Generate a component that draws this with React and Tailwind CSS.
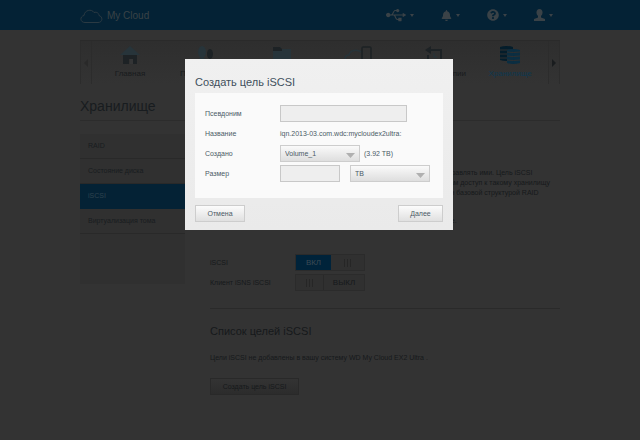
import { useState } from "react";
import { FaBell, FaQuestionCircle, FaUsb } from "react-icons/fa";

const sections = ["RAID", "Состояние диска", "iSCSI", "Виртуализация тома"];

function HomeIcon() {
  return (
    <svg width="20" height="18" viewBox="0 0 20 18">
      <path d="M3 9h14v9h-4v-5H9v5H3z" fill="#1d2225" />
      <path d="M10 0 20 9H0z" fill="#27343a" />
      <path d="M10 13h3v5h-3z" fill="#343536" />
    </svg>
  );
}

function UsersIcon() {
  return (
    <svg width="20" height="18" viewBox="0 0 20 18">
      <ellipse cx="6" cy="6" rx="4" ry="6" fill="#27343a" />
      <path d="M1 18c0-5 2-6 5-6s5 1 5 6z" fill="#27343a" />
      <ellipse cx="14" cy="8" rx="3" ry="5" fill="#1d2225" />
      <path d="M10 18c0-4 1-5 4-5s5 1 5 5z" fill="#1d2225" />
    </svg>
  );
}

function FolderIcon() {
  return (
    <svg width="18" height="18" viewBox="0 0 18 18">
      <path d="M0 1h8v2h10v14H0z" fill="#27343a" />
      <path d="M0 1h7l2 2v2H0z" fill="#1d2225" />
    </svg>
  );
}

function CloudAccessIcon() {
  return (
    <svg width="28" height="18" viewBox="0 0 28 18" fill="none">
      <path
        d="M17 16H5c-5 0-5-7 0-7 1-5 8-6 12-3"
        stroke="#27343a"
        strokeWidth="1.5"
      />
      <rect x="18" y="1" width="9" height="16" rx="1" stroke="#1d2225" strokeWidth="1.5" />
    </svg>
  );
}

function BackupIcon() {
  return (
    <svg width="18" height="18" viewBox="0 0 18 18" fill="none">
      <path d="M3 4h13v13H3V9" stroke="#1d2225" strokeWidth="2" />
      <path d="M6 0v8L0 4z" fill="#1d2225" />
      <path d="M9 7v4h3" stroke="#27343a" />
    </svg>
  );
}

function StorageIcon() {
  return (
    <svg width="20" height="18" viewBox="0 0 20 18">
      <path d="M0 1q6-2 13 0v13q-7 2-13 0z" fill="#041d2b" />
      <path d="M0 4h13M0 8h13M0 12h13" stroke="#303030" />
      <path d="M7 4q6-2 13 0v13q-7 2-13 0z" fill="#0b2e42" />
      <path d="M7 6q6 1 13 0M7 10q6 1 13 0M7 14q6 1 13 0" stroke="#303030" fill="none" />
    </svg>
  );
}

function UserIcon() {
  return (
    <svg width="11" height="12" viewBox="0 0 11 12" fill="currentColor">
      <ellipse cx="5.5" cy="3.5" rx="3" ry="3.5" />
      <path d="M4 6h3v2.5l4 1.5v2H0v-2l4-1.5z" />
    </svg>
  );
}

function Caret() {
  return (
    <svg width="4" height="3" viewBox="0 0 4 3" fill="currentColor">
      <path d="M0 0h4L2 3z" />
    </svg>
  );
}

const navItems = [
  { label: "Главная", icon: <HomeIcon /> },
  { label: "Пользователи", icon: <UsersIcon /> },
  { label: "Общие ресурсы", icon: <FolderIcon /> },
  { label: "Доступ к облаку", icon: <CloudAccessIcon /> },
  { label: "Резервные копии", icon: <BackupIcon /> },
  { label: "Хранилище", icon: <StorageIcon />, active: true },
];

function Header() {
  return (
    <header className="h-[30px] bg-[#042235]">
      <div className="mx-auto flex h-full max-w-[480px] items-center justify-between pr-[7px] text-[#3a4247]">
        <a href="#home" className="flex items-center gap-1 pt-0.5 text-[10px]">
          <svg width="23" height="15" viewBox="0 0 23 15" fill="none">
            <path
              d="M5 13.5C0 13.5-.5 7.500 4 6.500 4.500 1 11.500-.5 14 3.500c3-1 5 1 5 3 4 1 4 7-1 7z"
              stroke="#2b3a43"
            />
          </svg>
          My Cloud
        </a>
        <div className="flex gap-[27px]">
          <button aria-label="USB" className="flex items-center gap-1">
            <FaUsb size={20} />
            <Caret />
          </button>
          <button aria-label="Уведомления" className="flex items-center gap-1">
            <FaBell size={11} />
            <Caret />
          </button>
          <button aria-label="Справка" className="flex items-center gap-1">
            <FaQuestionCircle size={12} />
            <Caret />
          </button>
          <button aria-label="Пользователь" className="flex items-center gap-1">
            <UserIcon />
            <Caret />
          </button>
        </div>
      </div>
    </header>
  );
}

function Nav() {
  return (
    <nav className="mt-[10px] flex h-11 border-t border-[#2a2a2a] bg-linear-to-b from-[#2e2e2e] to-[#333333] text-[8px]">
      <button
        aria-label="Назад"
        className="flex w-3 items-center justify-center border-x border-[#2c2c2c] text-[#292929]"
      >
        <svg width="4" height="8" viewBox="0 0 4 8" fill="currentColor">
          <path d="M4 0v8L0 4z" />
        </svg>
      </button>
      <div className="grid flex-1 grid-cols-6">
        {navItems.map((item) => (
          <a
            key={item.label}
            href="#nav"
            className={`flex flex-col items-center gap-[5px] pt-[5px] whitespace-nowrap ${
              item.active ? "text-[#0d3850]" : "text-[#181b1d]"
            }`}
          >
            {item.icon}
            <span>{item.label}</span>
          </a>
        ))}
      </div>
      <button
        aria-label="Вперед"
        className="flex w-3 items-center justify-center border-x border-[#2c2c2c] text-[#191c1e]"
      >
        <svg width="4" height="8" viewBox="0 0 4 8" fill="currentColor">
          <path d="M0 0v8l4-4z" />
        </svg>
      </button>
    </nav>
  );
}

function Grip() {
  return (
    <span className="flex h-2 w-[7px] justify-between">
      <span className="w-px bg-[#262626]" />
      <span className="w-px bg-[#262626]" />
      <span className="w-px bg-[#262626]" />
    </span>
  );
}

function Toggle({ id, checked, onChange }) {
  return (
    <label
      htmlFor={id}
      className="flex h-[17px] w-[70px] border border-[#2b2b2b] bg-[#303030] text-[8px]"
    >
      <input
        id={id}
        type="checkbox"
        className="sr-only"
        checked={checked}
        onChange={(e) => onChange(e.target.checked)}
      />
      {checked ? (
        <>
          <span className="flex w-[35px] items-center justify-center bg-[#00233a] text-[#3b4a54]">ВКЛ</span>
          <span className="flex flex-1 items-center justify-center">
            <Grip />
          </span>
        </>
      ) : (
        <>
          <span className="flex w-7 items-center justify-center border-r border-[#292929]">
            <Grip />
          </span>
          <span className="flex flex-1 items-center justify-center text-[#16191b]">ВЫКЛ</span>
        </>
      )}
    </label>
  );
}

function Select({ id, label, options }) {
  return (
    <span className="relative w-[80px]">
      <select
        id={id}
        aria-label={label}
        className="block h-[17px] w-full appearance-none border border-[#cdcdcd] bg-linear-to-b from-[#fafafa] to-[#dedede] pl-1"
      >
        {options.map((o) => (
          <option key={o}>{o}</option>
        ))}
      </select>
      <svg
        className="pointer-events-none absolute top-[8px] right-[5px]"
        width="9"
        height="5"
        viewBox="0 0 9 5"
        fill="#b0b0b0"
      >
        <path d="M0 0h9L4.500 5z" />
      </svg>
    </span>
  );
}

const buttonClass =
  "h-[17px] border border-[#cdcdcd] bg-linear-to-b from-[#fcfcfc] to-[#e0e0e0]";
const inputClass = "h-[17px] border border-[#c8c8c8] bg-[#eeeeee] px-1";

function CreateTargetDialog() {
  const [alias, setAlias] = useState("");
  const [size, setSize] = useState("");

  return (
    <div className="fixed inset-0 flex items-start justify-center pt-[59px] pr-0.5">
      <div
        role="dialog"
        aria-labelledby="dialog-title"
        className="w-[268px] bg-linear-to-b from-[#f0f0f0] to-[#eaeaea] px-[10px] pt-4 pb-2 text-[#4b5a66]"
      >
        <h2 id="dialog-title" className="text-[11px] leading-[14px] text-[#3f505d]">
          Создать цель iSCSI
        </h2>
        <div className="mt-1 grid grid-cols-[75px_1fr] auto-rows-[17px] items-center gap-y-[3px] bg-[#fafafa] px-[10px] pt-3 pb-4">
          <label htmlFor="alias">Псевдоним</label>
          <input
            id="alias"
            className={`${inputClass} w-[127px]`}
            value={alias}
            onChange={(e) => setAlias(e.target.value)}
          />
          <span>Название</span>
          <span className="whitespace-nowrap">iqn.2013-03.com.wdc:mycloudex2ultra:</span>
          <label htmlFor="volume">Создано</label>
          <div className="flex items-center gap-1">
            <Select id="volume" options={["Volume_1"]} />
            <span>(3.92 TB)</span>
          </div>
          <label htmlFor="size">Размер</label>
          <div className="flex items-center gap-[10px]">
            <input
              id="size"
              className={`${inputClass} w-[60px]`}
              value={size}
              onChange={(e) => setSize(e.target.value)}
            />
            <Select id="unit" label="Единица" options={["TB", "GB"]} />
          </div>
        </div>
        <div className="mt-[7px] flex justify-between">
          <button className={`${buttonClass} w-[50px]`}>Отмена</button>
          <button className={`${buttonClass} w-[45px]`}>Далее</button>
        </div>
      </div>
    </div>
  );
}

export default function App() {
  const [iscsi, setIscsi] = useState(true);
  const [isns, setIsns] = useState(false);

  return (
    <div className="min-h-screen bg-[#333333] font-['Liberation_Sans',Arial,sans-serif] text-[7px] leading-[10px] text-[#16191b]">
      <Header />
      <div className="mx-auto max-w-[480px]">
        <Nav />
        <h1 className="mt-[14px] border-b border-[#2c2c2c] pb-1.5 text-[14px] leading-4 text-[#181c1f]">
          Хранилище
        </h1>
        <div className="mt-[13px] flex items-start">
          <aside className="h-[150px] w-[105px] shrink-0 bg-[#303030]">
            {sections.map((s) => (
              <a
                key={s}
                href="#section"
                className={`flex h-[25px] items-center border-b pl-2 ${
                  s === "iSCSI"
                    ? "border-[#042235] bg-[#042235] text-[#2e424f]"
                    : "border-[#292929] text-[#181c1f]"
                }`}
              >
                {s}
              </a>
            ))}
          </aside>
          <main className="ml-[25px] flex-1 pt-[34px] whitespace-nowrap">
            <p>
              Система WD My Cloud EX2 Ultra позволяет вам создавать цели iSCSI и управлять ими. Цель iSCSI
              <br />
              похожа на внешний жесткий диск, но находится в вашей сети. Она дает вам доступ к такому хранилищу
              <br />
              по сети. Виртуальный диск хранится на томе системы и надежно защищен базовой структурой RAID
            </p>
            <p className="mt-[18px]">
              Чтобы создать новые цели iSCSI, включите службу и нажмите кнопку ниже.
            </p>
            <div className="mt-7 grid grid-cols-[85px_1fr] items-center gap-y-[3px]">
              <label htmlFor="iscsi">iSCSI</label>
              <Toggle id="iscsi" checked={iscsi} onChange={setIscsi} />
              <label htmlFor="isns">Клиент iSNS iSCSI</label>
              <Toggle id="isns" checked={isns} onChange={setIsns} />
            </div>
            <h2 className="mt-[17px] border-t border-[#2a2a2a] pt-[15px] text-[11px] leading-[14px]">
              Список целей iSCSI
            </h2>
            <p className="mt-[15px]">Цели iSCSI не добавлены в вашу систему WD My Cloud EX2 Ultra .</p>
            <button className="mt-[15px] h-[17px] w-[89px] border border-[#292929] bg-linear-to-b from-[#333333] to-[#2c2c2c]">
              Создать цель iSCSI
            </button>
          </main>
        </div>
      </div>
      <CreateTargetDialog />
    </div>
  );
}
